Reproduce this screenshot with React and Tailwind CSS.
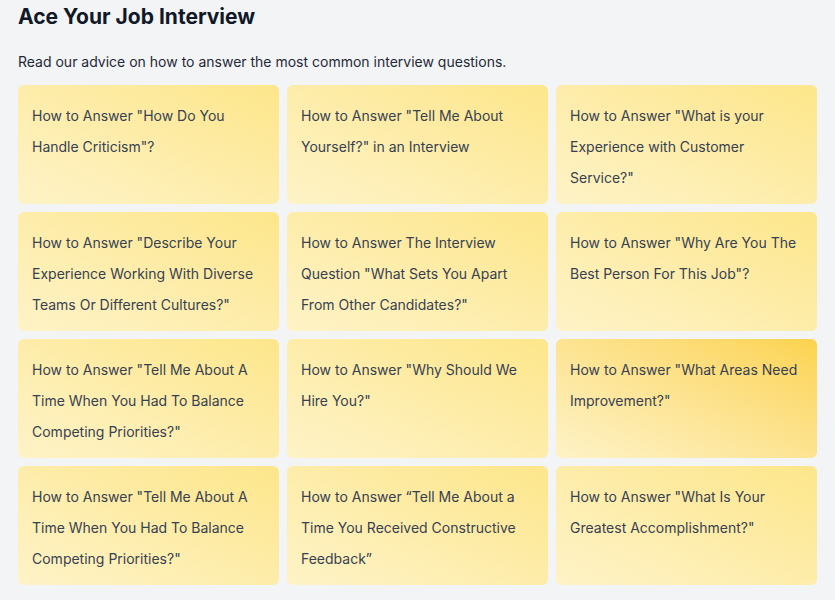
import React from 'react';

const questions = [
  'How to Answer "How Do You Handle Criticism"?',
  'How to Answer "Tell Me About Yourself?" in an Interview',
  'How to Answer "What is your Experience with Customer Service?"',
  'How to Answer "Describe Your Experience Working With Diverse Teams Or Different Cultures?"',
  'How to Answer The Interview Question "What Sets You Apart From Other Candidates?"',
  'How to Answer "Why Are You The Best Person For This Job"?',
  'How to Answer "Tell Me About A Time When You Had To Balance Competing Priorities?"',
  'How to Answer "Why Should We Hire You?"',
  'How to Answer "What Areas Need Improvement?"',
  'How to Answer "Tell Me About A Time When You Had To Balance Competing Priorities?"',
  'How to Answer \u201cTell Me About a Time You Received Constructive Feedback\u201d',
  'How to Answer "What Is Your Greatest Accomplishment?"',
];

const App = () => {
  return (
    <div className="min-h-[600px] bg-[#f3f4f6] px-[18px] pt-[3px] font-['Inter',sans-serif]">
      <h2 className="text-[21px] leading-[28px] font-bold text-[#111827]">Ace Your Job Interview</h2>
      <p className="mt-[21px] text-[14px] leading-[20px] text-[#1f2937]">
        Read our advice on how to answer the most common interview questions.
      </p>
      <div className="mt-[13px] grid grid-cols-3 gap-2">
        {questions.map((q, i) => (
          <a
            key={i}
            href="#"
            className={`h-[119px] rounded-md bg-gradient-to-tr from-[#fef3c7] px-[14px] pt-[15px] text-[14px] leading-[31px] text-[#374151] ${
              i === 8 ? 'to-[#fcd34d]' : 'to-[#fde68a]'
            }`}
          >
            {q}
          </a>
        ))}
      </div>
    </div>
  );
};

export default App;
